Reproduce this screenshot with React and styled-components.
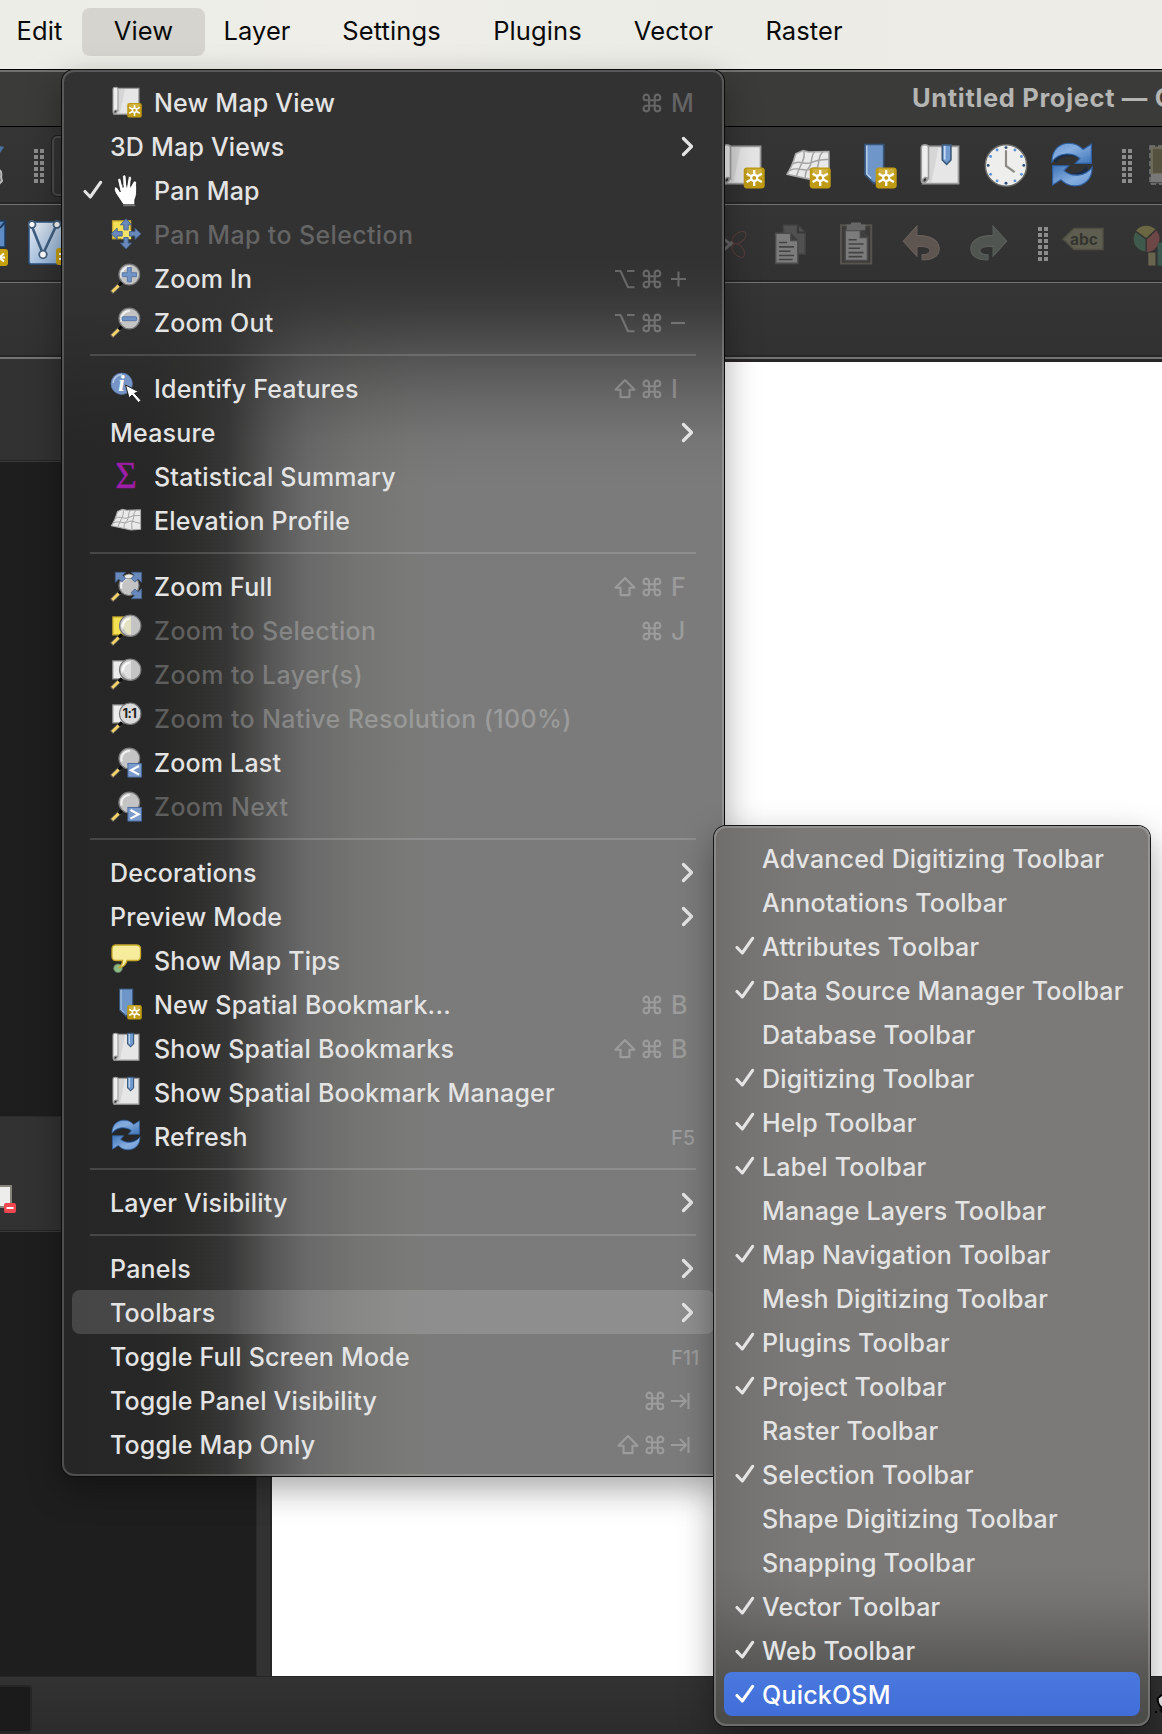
import React from "react";
import styled, { createGlobalStyle, css } from "styled-components";

const GlobalStyle = createGlobalStyle`
  * { box-sizing: border-box; }
  html, body { margin: 0; padding: 0; background: #1e1e1e; }
  body { font-family: Inter, "Liberation Sans", sans-serif; overflow: hidden; }
  svg { display: block; flex: none; }
`;

const Screen = styled.div`
  position: relative;
  display: flex;
  flex-direction: column;
  width: 1162px;
  height: 1734px;
  overflow: hidden;
`;

/* ---------- system menu bar ---------- */

const MenuBar = styled.nav`
  flex: none;
  display: flex;
  align-items: flex-start;
  height: 69px;
  padding-top: 8px;
  background: linear-gradient(90deg, #ebede6, #efeee9 30%, #ebece5 60%, #eeece7);
`;

const MenuBarItem = styled.span`
  flex: none;
  display: flex;
  align-items: center;
  justify-content: center;
  width: ${(p) => p.$width + 66}px;
  height: 48px;
  margin-right: -13px;
  padding-bottom: 4px;
  border-radius: 8px;
  background: ${(p) => (p.$open ? "#d5d4ce" : "transparent")};
  color: #0a0a0a;
  font-size: 25.5px;
  letter-spacing: 0.1px;
  white-space: nowrap;
  &:first-child { margin-left: -16px; }
`;

/* ---------- application window ---------- */

const Window = styled.main`
  flex: 1;
  min-height: 0;
  display: flex;
  flex-direction: column;
  background: #323232;
  border-top: 1px solid #000;
`;

const TitleBar = styled.header`
  flex: none;
  height: 57px;
  padding: 0 0 4px 912px;
  display: flex;
  align-items: center;
  border-top: 2px solid #71716f;
  border-bottom: 1px solid #000;
  background: #3b3b39;
  color: #b5b5b3;
  font-size: 25.5px;
  font-weight: 700;
  letter-spacing: 0.65px;
  white-space: nowrap;
`;

const ToolRow = styled.div`
  flex: none;
  display: flex;
  align-items: center;
  height: ${(p) => p.$height}px;
  border-bottom: ${(p) => p.$line || 1}px solid #747474;
  background: linear-gradient(#353535, #313131);
  box-shadow: inset 0 -2px 0 #272727;
  overflow: hidden;
`;

const ToolRowStart = styled.div`
  flex: none;
  display: flex;
  align-items: center;
  width: ${(p) => p.$width}px;
  height: 100%;
`;

const ToolCell = styled.div`
  flex: none;
  display: flex;
  align-items: center;
  justify-content: center;
  width: 66px;
  margin-left: ${(p) => p.$before || 0}px;
`;

const Grip = styled.div`
  flex: none;
  width: 10px;
  height: 34px;
  margin-left: ${(p) => p.$before}px;
  margin-right: ${(p) => p.$after}px;
  background:
    linear-gradient(#323232, #323232) 4px 0 / 2px 34px no-repeat,
    repeating-linear-gradient(#8c8c8c 0 4px, #323232 4px 6px);
`;

const Combo = styled.div`
  flex: none;
  width: 300px;
  height: 60px;
  border: 2px solid #4c4c4c;
  outline: 1px solid #202020;
  border-radius: 5px;
`;

const Workspace = styled.section`
  flex: 1;
  min-height: 0;
  display: flex;
`;

const SidePanels = styled.aside`
  flex: none;
  display: flex;
  flex-direction: column;
  width: 257px;
  border-right: 1px solid #2a2a2a;
`;

const PanelHeader = styled.div`
  flex: none;
  display: flex;
  align-items: flex-end;
  height: ${(p) => p.$height}px;
  padding-bottom: 17px;
  background: #323232;
  border-top: ${(p) => (p.$top ? "1px solid #2b2b2b" : "0")};
  border-bottom: 1px solid #3a3a3a;
  box-shadow: inset 0 -1px 0 #242424;
`;

const PanelBody = styled.div`
  flex: ${(p) => (p.$height ? "none" : 1)};
  height: ${(p) => (p.$height ? p.$height + "px" : "auto")};
  background: #1e1e1e;
`;

const Splitter = styled.div`
  flex: none;
  width: 15px;
  background: #323232;
  border-right: 2px solid #272727;
`;

const MapCanvas = styled.div`
  flex: 1;
  background: #fff;
  border-top: 3px solid #272425;
`;

const StatusBar = styled.footer`
  flex: none;
  display: flex;
  align-items: flex-start;
  justify-content: space-between;
  height: 58px;
  padding-top: 8px;
  border-top: 1px solid #262626;
  background: linear-gradient(#323232, #2c2c2c);
`;

const StatusField = styled.div`
  width: 32px;
  height: 48px;
  border: 2px solid #262626;
  border-left: 0;
  border-radius: 0 4px 4px 0;
  background: #1b1b1b;
`;

/* ---------- drop-down menus ---------- */

const menuSurface = css`
  position: absolute;
  display: flex;
  flex-direction: column;
  padding: 10px;
  border-radius: 12px;
  &::after {
    content: "";
    position: absolute;
    inset: 0;
    border: 2px solid rgba(255, 255, 255, 0.19);
    border-radius: inherit;
    pointer-events: none;
  }
`;

const ViewMenu = styled.div`
  ${menuSurface}
  left: 62px;
  top: 70px;
  width: 662px;
  height: 1406px;
  background:
    linear-gradient(180deg,
      #323232 0, #323232 190px, rgba(50, 50, 50, 0.95) 215px,
      rgba(50, 50, 50, 0.86) 238px, rgba(50, 50, 50, 0.7) 262px,
      rgba(50, 50, 50, 0.5) 292px, rgba(50, 50, 50, 0.27) 330px,
      rgba(50, 50, 50, 0.08) 370px, rgba(50, 50, 50, 0) 415px),
    linear-gradient(90deg,
      #262626 0, #272727 90px, #2c2c2a 125px, #363636 165px, #474746 188px,
      #575757 210px, #696969 245px, #747472 295px, #7a7a79 350px,
      #7b7b7b 400px, #7b7b7b 100%);
  box-shadow: 0 0 0 1px #0c0c0c, 0 12px 34px rgba(0, 0, 0, 0.36);
`;

const ToolbarsMenu = styled.div`
  ${menuSurface}
  left: 714px;
  top: 826px;
  width: 436px;
  height: 900px;
  background:
    linear-gradient(180deg,
      rgba(75, 75, 74, 0) 0, rgba(75, 75, 74, 0) 740px, rgba(75, 75, 74, 0.14) 775px,
      rgba(75, 75, 74, 0.45) 812px, rgba(75, 75, 74, 0.72) 845px, rgba(75, 75, 74, 1) 890px),
    linear-gradient(90deg, #6f6e6c 0, #757472 35px, #7a7977 90px, #7b7a78 100%);
  box-shadow: 0 0 0 1px #161616, 0 12px 34px rgba(0, 0, 0, 0.36);
`;

const Row = styled.div`
  flex: none;
  display: flex;
  align-items: center;
  height: 44px;
  padding-right: 21px;
  border-radius: 8px;
  white-space: nowrap;
  font-size: 25px;
  font-weight: 500;
  color: ${(p) => (p.$disabled ? "rgba(255,255,255,0.25)" : "#e4e4e4")};
  ${(p) => p.$hover && css`background: rgba(255, 255, 255, 0.15);`}
  ${(p) => p.$active && css`
    background: linear-gradient(#4a79df, #406dd8);
    color: #fff;
  `}
`;

const CheckSlot = styled.span`
  flex: none;
  display: flex;
  align-items: center;
  justify-content: flex-end;
  width: 38px;
  padding-right: 7px;
`;

const IconSlot = styled.span`
  flex: none;
  width: 44px;
`;

const Label = styled.span`
  flex: 1;
  padding-top: 2px;
  letter-spacing: ${(p) => (p.$disabled ? 0.36 : 0.2)}px;
`;

const Keys = styled.span`
  flex: none;
  display: flex;
  align-items: center;
  gap: 5px;
  padding-top: 2px;
  color: rgba(255, 255, 255, 0.25);
`;

const KeyChar = styled.span`
  width: 22px;
  margin-left: ${(p) => (p.$fn ? 0 : 3)}px;
  padding-top: ${(p) => (p.$fn ? 2 : 0)}px;
  font-size: ${(p) => (p.$fn ? 20 : 25)}px;
`;

const KeyShape = styled.svg`
  width: 22px;
  height: 22px;
  margin-left: ${(p) => (p.$last ? 3 : 0)}px;
`;

const Divider = styled.hr`
  flex: none;
  width: 606px;
  height: 2px;
  margin: 10px 0 10px 18px;
  border: 0;
  background: rgba(255, 255, 255, 0.15);
`;

/* ---------- icons ---------- */

const Svg = ({ size = 32, box = "0 0 32 32", children }) => (
  <svg width={size} height={size} viewBox={box} fill="none" overflow="visible">{children}</svg>
);

const Badge = ({ x = 17.2, y = 17 }) => (
  <g transform={`translate(${x} ${y})`}>
    <rect width="14.6" height="14.6" rx="2.2" fill="#bf9b14" />
    <path d="M2 1h10.6v5.5H2z" fill="#d5b84e" opacity="0.7" />
    <path d="M7.3 1.7v11.2M2 4.4l10.6 5.8M12.6 4.4L2 10.2" stroke="#fff" strokeWidth="1.6" />
    <circle cx="7.3" cy="7.3" r="2.1" fill="#bf9b14" stroke="#fff" strokeWidth="1.5" />
  </g>
);

const Scroll = () => (
  <g>
    <path d="M7 2.3h21.9v25.9H4.5L7 26z" fill="#e6e6e6" stroke="#9c9c9c" strokeWidth="1.2" />
    <path d="M8 3h7L10 27.5H8z" fill="#cfcfcf" opacity="0.7" />
    <path d="M3 3.2c0-2.6 5-2.6 5 0v21.6c-2-1.6-4-.6-4 1.4 0 1 .8 1.8 1.5 2-1.7 0-2.5-1-2.5-2.6z" fill="#ededed" stroke="#9c9c9c" strokeWidth="1.1" />
  </g>
);

const NewMapIcon = ({ size }) => <Svg size={size}><Scroll /><Badge /></Svg>;

const BookmarksIcon = ({ size }) => (
  <Svg size={size}>
    <Scroll />
    <path d="M17.6 1.3h6v10.5l-3 3-3-3z" fill="#6f9bd0" stroke="#3c5878" strokeWidth="1.1" />
    <path d="M19.3 2v9.5" stroke="#c5daf0" strokeWidth="1.2" />
  </Svg>
);

const NewBookmarkIcon = ({ size }) => (
  <Svg size={size}>
    <path d="M9.7 1h13v21L16 28.2 9.7 22z" fill="#6f96c8" stroke="#36557a" strokeWidth="1.1" />
    <path d="M11 1.8v19.7l3 3" stroke="#b9d0ea" strokeWidth="1" />
    <Badge />
  </Svg>
);

const MeshIcon = ({ size, badge }) => (
  <Svg size={size}>
    <g strokeLinejoin="round">
      <path d="M7.5 7.5L12.500 5.300l4 1 14-.4.1 19.400-9.600.7L1.300 21.800C4 18 6 13 7.500 7.500z" fill="#e9e9e9" stroke="#a9a9a9" strokeWidth="1.100" />
      <path d="M5.500 14.500c5-3.500 7.500 1.500 13-1s8-2 12-2M3.500 19c6-3 10 1.500 14.500-1s8 1.500 12.500 1M13 6c2 4-3 10-5 17M20.500 6.200c-3 3-1 8-4 11s-2 4-2.500 7M26.500 6c-4 3-2 7-4 11s0 5-.5 8" stroke="#a2a2a2" strokeWidth="1" />
    </g>
    {badge && <Badge />}
  </Svg>
);

const HandIcon = () => (
  <Svg>
    <g transform="translate(.8 0)">
      <path d="M12.500 30.800L5 19.500C3.500 17 3 13.500 4.500 13c1.600-.5 3 2 5 5L7 6.500C6.600 4 9.400 3.200 10 5.500L12.300 13l-.5-10.200c0-2.500 3.200-2.500 3.400 0l.8 8.500 1.500-7.500c.5-2.300 3.300-1.800 3.100.7L20 12l2.500-4c1-2 3.800-1 3.100 1.500C26 17 26 22 24 25.500v5.300z" fill="#fff" stroke="#111" strokeWidth="0.700" />
      <path d="M11 9l2 6h8l1.500-4v9H11z" fill="#fff" />
      <path d="M10.800 8l1.500 6M16 4.500v9M20.300 6.500l-.5 7" stroke="#222" strokeWidth="0.700" />
      <path d="M12.500 31.700h12" stroke="#8d8d8d" strokeWidth="0.900" />
    </g>
  </Svg>
);

const PanSelectionIcon = () => (
  <Svg>
    <rect x="2.600" y="2.900" width="18" height="17.800" fill="#f3df55" stroke="#c6a92c" strokeWidth="1.300" />
    <path d="M11.500 12h9.500v9h-9.500z" fill="#f3e36b" />
    <path d="M16 .8l5.600 6h-3.400v5h-4.400v-5h-3.400zM16 31l5.600-6h-3.400v-5.500h-4.400V25h-3.400zM1.200 15.800l6-5.600v3.400h5v4.400h-5v3.400zM31 15.800l-6-5.600v3.400h-5.500v4.400H25v3.400z" fill="#6989bb" stroke="#3f5f90" strokeWidth="0.900" />
  </Svg>
);

const Lens = ({ cx = 19.3, cy = 12.5, r = 10.4, fill = "#c4c4c4" }) => (
  <g>
    <path d="M1.500 30.600L10 22.300" stroke="#6b675d" strokeWidth="4.200" />
    <path d="M2.300 29.800L9 23.200" stroke="#f7d468" strokeWidth="2.600" />
    <path d="M8.700 23.500l3.300-3.200" stroke="#0c0c0c" strokeWidth="3.200" />
    <circle cx={cx} cy={cy} r={r} fill={fill} stroke="#77777a" strokeWidth="1.200" />
    <path d={`M${cx - 7.500} ${cy + 3}a8 8 0 0 1 8-10.500`} stroke="#fff" strokeWidth="2" opacity="0.750" />
  </g>
);

const ZoomInIcon = () => (
  <Svg><Lens /><path d="M17.300 5.500h4v5.200h5.200v4h-5.200v5.200h-4v-5.200h-5.200v-4h5.200z" fill="#7293c6" stroke="#4e6e9f" strokeWidth="0.800" /></Svg>
);
const ZoomOutIcon = () => (
  <Svg><Lens /><rect x="12" y="10.700" width="14.600" height="4" rx="1" fill="#7293c6" stroke="#4e6e9f" strokeWidth="0.800" /></Svg>
);
const ZoomFullIcon = () => {
  const corner = "M5.300 2.300h10.300l-3 3 3.200 3-3.800 3.800-3.200-3.200-3.500 3.500z";
  return (
    <Svg>
      <Lens cx={19} cy={15.500} r={10} />
      <path d="M14.500 5.500q4.500-3 9 0v3h-9z" fill="#e8e8e4" stroke="#8a8a88" strokeWidth="0.800" />
      <g fill="#6989bb" stroke="#405f8e" strokeWidth="0.800">
        <path d={corner} />
        <path d={corner} transform="translate(36.900 0) scale(-1 1)" />
        <path d={corner} transform="translate(36.900 31) scale(-1 -1)" />
      </g>
    </Svg>
  );
};
const ZoomTargetIcon = ({ fill, line, tint, text }) => (
  <Svg>
    <rect x="2.800" y="2.900" width="16" height="18" fill={fill} stroke={line} strokeWidth="1.200" />
    <Lens cx={20.200} cy={11.700} r={10.700} />
    <path d="M21 2.600v18.200a9.200 9.200 0 0 1 0-18.200z" fill={tint} opacity="0.850" />
    <path d="M13 12.500a8 8 0 0 1 6.500-7.700" stroke="#fff" strokeWidth="2" opacity="0.800" />
    {text && <circle cx="20.200" cy="11.700" r="10" fill="#dadada" />}
    {text && <text x="19.500" y="16.400" textAnchor="middle" fontFamily="Inter" fontWeight="700" fontSize="13" letterSpacing="-0.600" fill="#222">1:1</text>}
  </Svg>
);
const ZoomStepIcon = ({ next }) => (
  <Svg>
    <Lens />
    <rect x="17.900" y="17.400" width="13.700" height="13.700" fill="#7a9bcc" stroke="#45659a" strokeWidth="0.900" />
    <path d={next ? "M20.500 20l8 4.300-8 4.300" : "M29 20l-8 4.300 8 4.300"} stroke="#fff" strokeWidth="2.200" />
  </Svg>
);

const IdentifyIcon = () => (
  <Svg>
    <circle cx="11.700" cy="11.700" r="10.700" fill="#7695c6" stroke="#5878aa" strokeWidth="0.700" />
    <path d="M3 11a9 9 0 0 1 9-8.500" stroke="#b9cbe6" strokeWidth="1.600" />
    <text x="11.500" y="18.800" textAnchor="middle" fontFamily="Liberation Serif, serif" fontStyle="italic" fontWeight="700" fontSize="23" fill="#fff">i</text>
    <path d="M15.500 13l3.600 13 2.900-3 6.500 7.500 2.500-2-6.500-7.200 4.200-1.500z" fill="#fff" stroke="#222" strokeWidth="1" />
  </Svg>
);

const SigmaIcon = () => (
  <Svg><text x="16" y="28" textAnchor="middle" fontFamily="Liberation Serif, serif" fontSize="37" fill="#a01faa" stroke="#8b1a94" strokeWidth="0.600">Σ</text></Svg>
);

const TipsIcon = () => (
  <Svg>
    <circle cx="8" cy="24.300" r="4.300" fill="#8db985" stroke="#5e7b59" strokeWidth="0.800" />
    <path d="M6 1h20.500c2.500 0 4 1.500 4 4v7.500c0 2.500-1.500 4-4 4H17c-.5 3-3 6.500-8.500 7.300 3-2 4-4.300 4-7.300H6c-2.500 0-4-1.500-4-4V5c0-2.500 1.500-4 4-4z" fill="#f7ec9c" stroke="#c8a92c" strokeWidth="1.300" />
  </Svg>
);

const RefreshIcon = ({ size }) => {
  const arrow = "M2 13.200C2 4 8 .2 14 .2c4 0 7 1.500 9.700 4.300L29.500.8v13.400h-11.200l3.200-3.400C17 6.500 7 6 2 13.200z";
  return (
    <Svg size={size}>
      <defs>
        <linearGradient id="refreshArrow" x1="0" y1="0" x2="1" y2="1">
          <stop offset="0" stopColor="#6797d4" /><stop offset="0.4" stopColor="#86aedf" /><stop offset="1" stopColor="#3f74b8" />
        </linearGradient>
      </defs>
      <path d="M3 12c3-6 14-7 18.500-1.500C14 8 7 9 5 14zM27 19c-3 5-13 6-17.500 1.500C17 22 24 21 26 16z" fill="#1b2c44" />
      <path d={arrow} fill="url(#refreshArrow)" stroke="#2f61a3" strokeWidth="0.800" />
      <path d={arrow} transform="rotate(180 16 15)" fill="url(#refreshArrow)" stroke="#2f61a3" strokeWidth="0.800" />
    </Svg>
  );
};

const ClockIcon = () => (
  <Svg size={46}>
    <circle cx="16" cy="15.600" r="14.400" fill="#eeeeec" stroke="#6c6c6a" strokeWidth="1" />
    {Array.from({ length: 12 }, (_, i) => {
      const a = (i * Math.PI) / 6;
      return <circle key={i} cx={16 + 12.400 * Math.sin(a)} cy={15.600 - 12.400 * Math.cos(a)} r="1" fill={i % 3 ? "#5a93d6" : "#2c4a75"} />;
    })}
    <path d="M16 5v11l6 4.300" stroke="#8a8a82" strokeWidth="1.500" />
  </Svg>
);

const ScissorsIcon = () => (
  <Svg size={46}>
    <path d="M12 9.500l9.500 7.500M14 22l8-7.500" stroke="#858585" strokeWidth="2" opacity="0.600" />
    <ellipse cx="26.500" cy="11.500" rx="5.500" ry="3.300" transform="rotate(-38 26.500 11.500)" stroke="#5a3d3d" strokeWidth="0.700" />
    <ellipse cx="26" cy="20.500" rx="5.500" ry="3.300" transform="rotate(50 26 20.500)" stroke="#5a3d3d" strokeWidth="0.700" />
  </Svg>
);

const Sheet = ({ x, y }) => (
  <g transform={`translate(${x} ${y})`}>
    <path d="M0 0h10.500l5 5v16H0z" fill="#7c7c7c" stroke="#4b4b4b" strokeWidth="1.100" />
    <path d="M10.500 0v5h5" fill="#3c3c3c" stroke="#4b4b4b" />
    <path d="M2.300 6.500H8M2.300 9.500h10.500M2.300 12.500h8M2.300 15.500h10.500M2.300 18.300h9.500" stroke="#434343" strokeWidth="1.100" />
  </g>
);

const CopyIcon = () => (
  <Svg size={46}>
    <path d="M11.500 3h10l5 5v15h-15z" fill="#515151" stroke="#454545" strokeWidth="1" />
    <path d="M21.500 3v5h5" stroke="#393939" strokeWidth="1.500" />
    <Sheet x={6} y={8.500} />
  </Svg>
);

const PasteIcon = () => (
  <Svg size={46}>
    <rect x="5.600" y="3" width="21" height="26.600" fill="#3b3a38" stroke="#575450" strokeWidth="1.400" />
    <Sheet x={8.500} y={6.500} />
    <path d="M9.500 2.500h3V1h7v1.500h3v4h-13z" fill="#666" />
  </Svg>
);

const UndoIcon = ({ redo }) => (
  <Svg size={46}>
    <g transform={redo ? "translate(32 -1.500) scale(-1 1)" : "translate(0 -1.500)"}>
      <path d="M3 15.500L12.500 5v6.500c9.500 0 15.500 3.500 15.500 9.500 0 5-5 8-12 7.500v-3.500c4 0 6-1.500 5.500-3.500-.5-2-3.500-2.500-9-2.500v7z" fill={redo ? "#505552" : "#5e5551"} stroke={redo ? "#5b605d" : "#6b615c"} strokeWidth="0.700" />
    </g>
  </Svg>
);

const TagIcon = () => (
  <svg width="42" height="46" viewBox="0 0 42 46">
    <path d="M1 18L12 7.500h29v21H12z" fill="#5d5e4f" stroke="#504f43" strokeWidth="1.500" />
    <text x="22" y="24" textAnchor="middle" fontFamily="Inter" fontWeight="700" fontSize="15.500" fill="#343530">abc</text>
  </svg>
);

const DiagramIcon = () => (
  <Svg size={46}>
    <circle cx="14" cy="12.500" r="8.700" fill="#40594d" />
    <path d="M14 12.500L6.500 7.500a9 9 0 0 1 14.500-1z" fill="#6b6743" />
    <path d="M14 12.500l7-6a9 9 0 0 1-6.500 15z" fill="#6d4646" />
    <path d="M6.500 7l7.500 5.500V21M14 12.500L21 6" stroke="#333" strokeWidth="1" />
    <path d="M15.500 22h5v9h-5z" fill="#69644d" /><path d="M22 15h6v16h-6z" fill="#3c584e" />
  </Svg>
);

const SelectAreaIcon = () => (
  <svg width="46" height="46" viewBox="0 0 46 46">
    <path d="M2 3h40v38H2z" stroke="#777" strokeWidth="1.500" strokeDasharray="5 3" fill="#4b4b4b" />
    <path d="M4 5h38v26H4z" fill="#55523f" stroke="#6e6b58" strokeWidth="2" />
    <path d="M3 31h40v8H3z" fill="#777" />
  </svg>
);

const ToolEdgeIcon = () => (
  <svg width="12" height="48" viewBox="0 0 12 48">
    <path d="M0 4l4 1-4 6z" fill="#47719f" />
    <path d="M0 28q2 3 1 7l1 4-3 3" stroke="#b9b9b9" strokeWidth="2" fill="#555" />
  </svg>
);

const LayerEdgeIcon = () => (
  <svg width="8" height="48" viewBox="0 0 8 48">
    <path d="M-2 1h7v26h-7z" fill="#5d8dc4" stroke="#1d3c63" strokeWidth="1.500" />
    <path d="M0 8l5-6" stroke="#1d3c63" strokeWidth="2" />
    <rect x="-10" y="29" width="18" height="17" rx="3" fill="#c7a10c" />
    <path d="M-4 37.500h9M-1 37.500l5-4M-1 37.500l5 4" stroke="#fff" strokeWidth="2" />
  </svg>
);

const VertexIcon = () => (
  <svg width="44" height="48" viewBox="0 0 44 48">
    <defs>
      <linearGradient id="vertexFill" x1="0" y1="0" x2="1" y2="1">
        <stop offset="0" stopColor="#e8edf4" /><stop offset="1" stopColor="#7ba4d2" />
      </linearGradient>
    </defs>
    <rect x="1" y="2" width="42" height="42" rx="2" fill="url(#vertexFill)" stroke="#2e5280" strokeWidth="1.500" />
    <path d="M3 4l12 30L29 4" stroke="#3f5f82" strokeWidth="2.600" fill="none" />
    <g fill="#fff" stroke="#45617f" strokeWidth="1.800"><circle cx="4" cy="4.500" r="3.500" /><circle cx="29" cy="4.500" r="3.500" /><circle cx="15" cy="34.500" r="3.800" /></g>
    <rect x="28" y="28" width="18" height="17" rx="3" fill="#c7a10c" />
    <path d="M31 34h8M31 39h8" stroke="#fff" strokeWidth="1.800" />
  </svg>
);

const RemoveLayerIcon = () => (
  <svg width="17" height="30" viewBox="0 0 17 30">
    <path d="M-4 2h15v21H-4z" fill="#ededeb" stroke="#85857b" strokeWidth="2" />
    <rect x="4" y="19" width="12" height="10" rx="2" fill="#ef4650" />
    <path d="M6.500 24h7" stroke="#fff" strokeWidth="2" />
  </svg>
);

const PointerEdgeIcon = () => (
  <svg width="8" height="36" viewBox="0 0 8 36">
    <path d="M9 9L4 13q-1 4 2 8l3 3z" fill="#eee" stroke="#050505" strokeWidth="2" />
    <path d="M1 26h2v2H1zM5 24l4 6v-6z" fill="#050505" />
  </svg>
);

const Check = () => (
  <svg width="20" height="20" viewBox="0 0 20 20" fill="none">
    <path d="M2 11.500L7.300 17 17.600 2.300" stroke="currentColor" strokeWidth="3.100" strokeLinecap="round" strokeLinejoin="round" />
  </svg>
);

const Chevron = () => (
  <svg width="12" height="22" viewBox="0 0 12 22" fill="none">
    <path d="M2.500 3.500l8 8-8 8" stroke="#e4e4e4" strokeWidth="3.200" strokeLinecap="round" strokeLinejoin="round" />
  </svg>
);

const keyArt = {
  cmd: "M13.700 5.400v11.200a2.800 2.800 0 1 0 2.800-2.800H5.300a2.800 2.800 0 1 0 2.800 2.800V5.400a2.800 2.800 0 1 0-2.800 2.800h11.200a2.800 2.800 0 1 0-2.800-2.800",
  opt: "M1 3h5.500l7.500 16.300h6.500M13 3h7.500",
  shift: "M11 2L1.500 11.800h5v7.300h9v-7.300h5z",
  tab: "M0 11h14.500M9 5l6 6-6 6M17.500 3v16",
  plus: "M0 11h15M7.500 3.500v15",
  minus: "M0 11h14",
};

const KeyCombo = ({ keys }) => (
  <Keys>
    {keys.map((k, i) => keyArt[k] ? (
      <KeyShape key={k} viewBox="0 0 22 22" fill="none" $last={i === keys.length - 1 && k !== "tab"}>
        <path d={keyArt[k]} stroke="currentColor" strokeWidth="2.100" strokeLinejoin="round" />
      </KeyShape>
    ) : <KeyChar key={k} $fn={k.length > 1}>{k}</KeyChar>)}
  </Keys>
);

/* ---------- content ---------- */

const menuTitles = [
  ["Edit", 45], ["View", 57], ["Layer", 64], ["Settings", 99],
  ["Plugins", 87], ["Vector", 79], ["Raster", 76],
];

const viewMenu = [
  { label: "New Map View", icon: <NewMapIcon />, keys: ["cmd", "M"] },
  { label: "3D Map Views", sub: true },
  { label: "Pan Map", icon: <HandIcon />, checked: true },
  { label: "Pan Map to Selection", icon: <PanSelectionIcon />, disabled: true },
  { label: "Zoom In", icon: <ZoomInIcon />, keys: ["opt", "cmd", "plus"] },
  { label: "Zoom Out", icon: <ZoomOutIcon />, keys: ["opt", "cmd", "minus"] },
  null,
  { label: "Identify Features", icon: <IdentifyIcon />, keys: ["shift", "cmd", "I"] },
  { label: "Measure", sub: true },
  { label: "Statistical Summary", icon: <SigmaIcon /> },
  { label: "Elevation Profile", icon: <MeshIcon /> },
  null,
  { label: "Zoom Full", icon: <ZoomFullIcon />, keys: ["shift", "cmd", "F"] },
  { label: "Zoom to Selection", icon: <ZoomTargetIcon fill="#f5e052" line="#b89d27" tint="#e8e6c2" />, keys: ["cmd", "J"], disabled: true },
  { label: "Zoom to Layer(s)", icon: <ZoomTargetIcon fill="#ececec" line="#8d8d8d" tint="#e3e3e3" />, disabled: true },
  { label: "Zoom to Native Resolution (100%)", icon: <ZoomTargetIcon fill="#ececec" line="#8d8d8d" tint="#e3e3e3" text />, disabled: true },
  { label: "Zoom Last", icon: <ZoomStepIcon /> },
  { label: "Zoom Next", icon: <ZoomStepIcon next />, disabled: true },
  null,
  { label: "Decorations", sub: true },
  { label: "Preview Mode", sub: true },
  { label: "Show Map Tips", icon: <TipsIcon /> },
  { label: "New Spatial Bookmark...", icon: <NewBookmarkIcon />, keys: ["cmd", "B"] },
  { label: "Show Spatial Bookmarks", icon: <BookmarksIcon />, keys: ["shift", "cmd", "B"] },
  { label: "Show Spatial Bookmark Manager", icon: <BookmarksIcon /> },
  { label: "Refresh", icon: <RefreshIcon />, keys: ["F5"] },
  null,
  { label: "Layer Visibility", sub: true },
  null,
  { label: "Panels", sub: true },
  { label: "Toolbars", sub: true, hover: true },
  { label: "Toggle Full Screen Mode", keys: ["F11"] },
  { label: "Toggle Panel Visibility", keys: ["cmd", "tab"] },
  { label: "Toggle Map Only", keys: ["shift", "cmd", "tab"] },
];

const toolbars = [
  ["Advanced Digitizing Toolbar"], ["Annotations Toolbar"], ["Attributes Toolbar", 1],
  ["Data Source Manager Toolbar", 1], ["Database Toolbar"], ["Digitizing Toolbar", 1],
  ["Help Toolbar", 1], ["Label Toolbar", 1], ["Manage Layers Toolbar"],
  ["Map Navigation Toolbar", 1], ["Mesh Digitizing Toolbar"], ["Plugins Toolbar", 1],
  ["Project Toolbar", 1], ["Raster Toolbar"], ["Selection Toolbar", 1],
  ["Shape Digitizing Toolbar"], ["Snapping Toolbar"], ["Vector Toolbar", 1],
  ["Web Toolbar", 1], ["QuickOSM", 1],
];

export default function App() {
  return (
    <Screen>
      <GlobalStyle />
      <MenuBar>
        {menuTitles.map(([t, w]) => (
          <MenuBarItem key={t} $width={w} $open={t === "View"}>{t}</MenuBarItem>
        ))}
      </MenuBar>

      <Window>
        <TitleBar>Untitled Project — Q</TitleBar>
        <ToolRow $height={78}>
          <ToolRowStart $width={709}>
            <ToolEdgeIcon />
            <Grip $before={22} $after={8} />
            <Combo />
          </ToolRowStart>
          <ToolCell><NewMapIcon size={46} /></ToolCell>
          <ToolCell><MeshIcon size={46} badge /></ToolCell>
          <ToolCell><NewBookmarkIcon size={46} /></ToolCell>
          <ToolCell><BookmarksIcon size={46} /></ToolCell>
          <ToolCell><ClockIcon /></ToolCell>
          <ToolCell><RefreshIcon size={46} /></ToolCell>
          <Grip $before={17} $after={16} />
          <SelectAreaIcon />
        </ToolRow>
        <ToolRow $height={78}>
          <ToolRowStart $width={691}>
            <LayerEdgeIcon />
            <ToolCell $before={9}><VertexIcon /></ToolCell>
          </ToolRowStart>
          <ToolCell><ScissorsIcon /></ToolCell>
          <ToolCell><CopyIcon /></ToolCell>
          <ToolCell><PasteIcon /></ToolCell>
          <ToolCell><UndoIcon /></ToolCell>
          <ToolCell><UndoIcon redo /></ToolCell>
          <Grip $before={17} $after={2} />
          <ToolCell><TagIcon /></ToolCell>
          <ToolCell><DiagramIcon /></ToolCell>
        </ToolRow>
        <ToolRow $height={76} $line={2} />

        <Workspace>
          <SidePanels>
            <PanelHeader $height={103} />
            <PanelBody $height={654} />
            <PanelHeader $height={116} $top><RemoveLayerIcon /></PanelHeader>
            <PanelBody />
          </SidePanels>
          <Splitter />
          <MapCanvas />
        </Workspace>

        <StatusBar>
          <StatusField />
          <PointerEdgeIcon />
        </StatusBar>
      </Window>

      <ViewMenu>
        {viewMenu.map((item, i) => item === null ? <Divider key={i} /> : (
          <Row key={item.label} $disabled={item.disabled} $hover={item.hover}>
            <CheckSlot>{item.checked && <Check />}</CheckSlot>
            {item.icon && <IconSlot>{item.icon}</IconSlot>}
            <Label $disabled={item.disabled}>{item.label}</Label>
            {item.sub && <Chevron />}
            {item.keys && <KeyCombo keys={item.keys} />}
          </Row>
        ))}
      </ViewMenu>

      <ToolbarsMenu>
        {toolbars.map(([label, on]) => (
          <Row key={label} $active={label === "QuickOSM"}>
            <CheckSlot>{on && <Check />}</CheckSlot>
            <Label>{label}</Label>
          </Row>
        ))}
      </ToolbarsMenu>
    </Screen>
  );
}
